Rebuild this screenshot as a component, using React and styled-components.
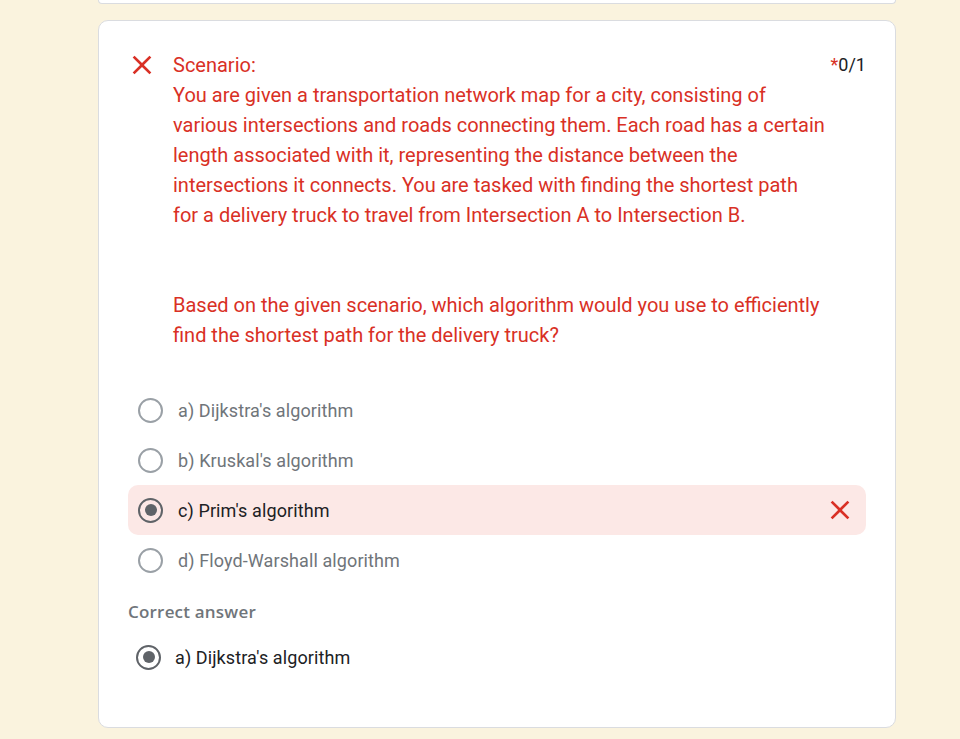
import React from 'react';
import styled, { createGlobalStyle } from 'styled-components';

const GlobalStyle = createGlobalStyle`
  html, body {
    margin: 0;
    padding: 0;
    background: #faf3de;
    font-family: Roboto, "Noto Sans", Arial, sans-serif;
  }
`;

const Page = styled.div`
  width: 960px;
  height: 739px;
  overflow: hidden;
  padding-left: 98px;
  box-sizing: border-box;
`;

const PrevCard = styled.div`
  width: 798px;
  height: 4px;
  box-sizing: border-box;
  background: #fff;
  border: 1px solid #dadce0;
  border-top: none;
  border-radius: 0 0 10px 10px;
  margin-bottom: 16px;
`;

const Card = styled.div`
  width: 798px;
  box-sizing: border-box;
  background: #fff;
  border: 1px solid #dadce0;
  border-radius: 10px;
  padding: 29px 29px 45px 29px;
`;

const Header = styled.div`
  display: flex;
  align-items: flex-start;
`;

const IconBox = styled.div`
  width: 32px;
  height: 30px;
  margin-left: -2px;
  margin-right: 15px;
  display: flex;
  align-items: center;
  justify-content: center;
  flex-shrink: 0;
`;

const Question = styled.div`
  width: 653px;
  color: #d93025;
  font-size: 20px;
  line-height: 30px;
`;

const Para = styled.p`
  margin: 0 0 ${p => p.$gap || 0}px 0;
`;

const Score = styled.div`
  margin-left: auto;
  font-size: 18px;
  line-height: 30px;
  color: #202124;
  white-space: nowrap;
`;

const Star = styled.span`
  color: #d93025;
`;

const Options = styled.div`
  margin-top: 35px;
  display: flex;
  flex-direction: column;
`;

const Row = styled.div`
  height: 50px;
  display: flex;
  align-items: center;
  gap: 15px;
  padding: 0 10px;
  border-radius: 10px;
  background: ${p => (p.$wrong ? '#fce8e6' : 'transparent')};
  font-size: 18px;
  letter-spacing: 0.1px;
  color: ${p => (p.$checked ? '#202124' : '#70757a')};
`;

const Radio = styled.span`
  width: 25px;
  height: 25px;
  box-sizing: border-box;
  border-radius: 50%;
  border: 2.5px solid ${p => (p.$checked ? '#5f6368' : '#9aa0a6')};
  display: flex;
  align-items: center;
  justify-content: center;
  flex-shrink: 0;

  &::after {
    content: "";
    display: ${p => (p.$checked ? 'block' : 'none')};
    width: 12px;
    height: 12px;
    border-radius: 50%;
    background: #5f6368;
  }
`;

const RowIcon = styled.span`
  margin-left: auto;
  display: flex;
`;

const CorrectLabel = styled.div`
  margin-top: 15px;
  font-family: "Open Sans", Roboto, sans-serif;
  font-size: 17px;
  line-height: 24px;
  font-weight: 600;
  color: #70757a;
  letter-spacing: 0.2px;
`;

const AnswerRow = styled(Row)`
  margin-top: 8px;
  padding-left: 8px;
  gap: 14px;
`;

const CloseIcon = () => (
  <svg width="32" height="32" viewBox="0 0 24 24" fill="#d93025">
    <path d="M19 6.41L17.59 5 12 10.59 6.41 5 5 6.41 10.59 12 5 17.59 6.41 19 12 13.41 17.59 19 19 17.59 13.41 12z" />
  </svg>
);

const options = [
  { label: "a) Dijkstra's algorithm" },
  { label: "b) Kruskal's algorithm" },
  { label: "c) Prim's algorithm", checked: true, wrong: true },
  { label: 'd) Floyd-Warshall algorithm' },
];

export default function App() {
  return (
    <Page>
      <GlobalStyle />
      <PrevCard />
      <Card>
        <Header>
          <IconBox>
            <CloseIcon />
          </IconBox>
          <Question>
            <Para>Scenario:</Para>
            <Para $gap={60}>
              You are given a transportation network map for a city, consisting of various
              intersections and roads connecting them. Each road has a certain length associated
              with it, representing the distance between the intersections it connects. You are
              tasked with finding the shortest path for a delivery truck to travel from
              Intersection A to Intersection B.
            </Para>
            <Para>
              Based on the given scenario, which algorithm would you use to efficiently find the
              shortest path for the delivery truck?
            </Para>
          </Question>
          <Score>
            <Star>*</Star>0/1
          </Score>
        </Header>

        <Options>
          {options.map(o => (
            <Row key={o.label} $checked={o.checked} $wrong={o.wrong}>
              <Radio $checked={o.checked} />
              <span>{o.label}</span>
              {o.wrong && (
                <RowIcon>
                  <CloseIcon />
                </RowIcon>
              )}
            </Row>
          ))}
        </Options>

        <CorrectLabel>Correct answer</CorrectLabel>
        <AnswerRow $checked>
          <Radio $checked />
          <span>a) Dijkstra's algorithm</span>
        </AnswerRow>
      </Card>
    </Page>
  );
}
